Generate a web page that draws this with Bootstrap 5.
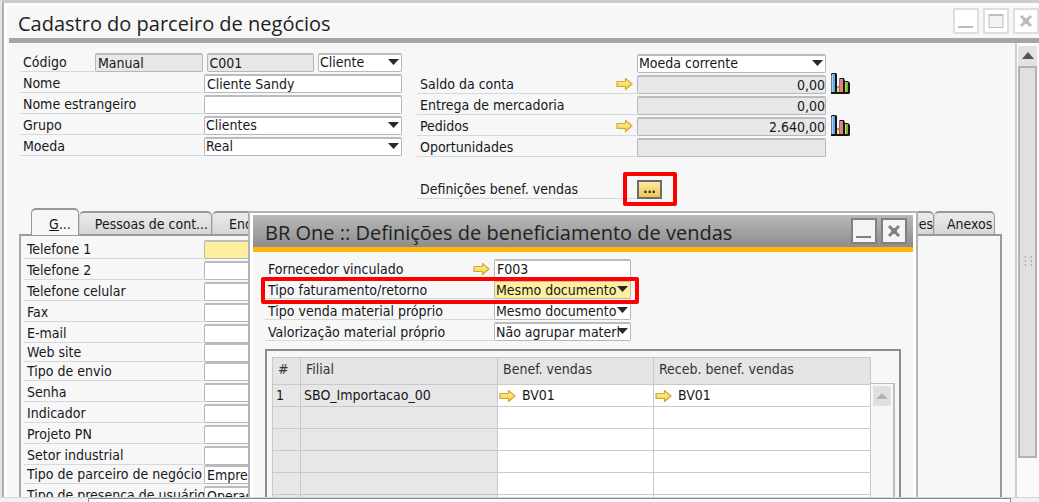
<!DOCTYPE html>
<html lang="pt-BR">
<head>
<meta charset="utf-8">
<meta name="viewport" content="width=device-width, initial-scale=1">
<title>Cadastro do parceiro de negócios</title>
<link href="https://cdn.jsdelivr.net/npm/bootstrap@5.3.0/dist/css/bootstrap.min.css" rel="stylesheet">
<style>
  body { font-family: "DejaVu Sans Condensed", "DejaVu Sans", sans-serif; font-size: 14px; line-height: 16px; color: #16181c; background: #e4e4e4; height: 100vh; }
  button, input, select { font: inherit; color: inherit; }
  /* window frame */
  .win { margin-left: 2px; border-left: 2px solid #b0b0b0; border-top: 3px solid #ccc; background: #f7f7f7; min-height: 0; }
  .win-in { border-left: 3px solid #fff; border-top: 3px solid #fff; min-height: 0; }
  .shrinkable { min-height: 0; min-width: 0; }
  .win-title { font-family: "Open Sans", "Noto Sans", sans-serif; font-size: 20px; line-height: 28px; color: #222; margin: 0; font-weight: 400; white-space: nowrap; }
  .main-bar { height: 32px; padding-left: 11px; }
  .main-rule { height: 5px; background: #a6a6a6; margin-left: 2px; }
  .wbtn { width: 26px; height: 26px; padding: 0; background: #fff; border: 2px solid #dedede; line-height: 0; }
  .wbtn svg { display: block; margin: auto; }
  .wset { gap: 4px; padding-top: 2px; color: #bdbdbd; }
  /* form rows */
  .frow { height: 19px; margin-bottom: 2px; display: flex; }
  .frow.tight { margin-bottom: 0; }
  .lbl { line-height: 16px; padding: 1px 0 0 3px; border-bottom: 1px solid #d3dade; white-space: nowrap; flex: none; display: flex; justify-content: space-between; align-items: center; }
  .w-code { width: 75px; }
  .w-tab { width: 180px; }
  .w-key { width: 184px; }
  .w-acc { width: 220px; }
  .w-dlg { width: 229px; }
  .fld { height: 19px; min-width: 0; flex: 1 1 0; border: 1px solid #b4b8ba; border-top: 2px solid #b9bdbf; border-radius: 2px; background: #fff; padding: 0 2px; line-height: 15px; outline: 0; }
  .fld[readonly] { background: #e7e7e7; }
  .fld.kind { flex: 0 0 84px; }
  input.text-end { padding-right: 0; }
  select.fld { appearance: none; padding: 0 10px 0 1px; background: #fff url("data:image/svg+xml,%3Csvg xmlns='http://www.w3.org/2000/svg' width='11' height='6'%3E%3Cpath d='M0 0h11L5.500 6z' fill='%2326282c'/%3E%3C/svg%3E") no-repeat right 2px top 4px; }
  select.fld.hot, .fld.hot { background-color: #ffee9c; }
  .col-left { width: 382px; margin: 10px 0 0 1px; }
  .col-right { width: 409px; margin: 11px 0 0 15px; }
  .row-def { margin-top: 23px; }
  .chart-col { padding-top: 30px; gap: 21px; }
  .dots { width: 25px; height: 19px; padding: 0; border: 2px solid #6c6c6c; background: linear-gradient(#fbe9a6, #f0c64d); font-size: 12px; line-height: 12px; font-weight: 700; }
  .mark-red::after { content: ""; position: absolute; border: 4px solid #f00; border-radius: 2px; pointer-events: none; inset: -8px -15px -7px -14px; }
  .mark-row::after { inset: -3px -8px -5px -4px; }
  /* tabs */
  .tab-area { margin-right: 13px; }
  .tabs-row { height: 26px; margin-top: 7px; padding: 0 7px 0 12px; }
  .tabx { height: 23px; border: 1px solid #989898; border-top-width: 2px; border-left-color: #ccc; border-bottom: 0; border-radius: 5px 5px 0 0; background: linear-gradient(#ececec, #d6d6d6); padding: 1px 0 0; white-space: nowrap; overflow: hidden; }
  .tabx.on { height: 27px; background: #f7f7f7; z-index: 1; border-left-color: #989898; padding: 4px 0 0 10px; margin-bottom: -1px; width: 48px; }
  .tab-m { width: 133px; padding-left: 12px; }
  .tab-s { width: 61px; padding-left: 12px; }
  .panel { border: 2px solid #9a9a9a; border-bottom: 0; border-left-color: #a8a8a8; padding: 4px 0 0 3px; overflow: hidden; min-height: 0; }
  .panel-form { width: 378px; }
  /* vertical scroll bar */
  .vbar { width: 24px; border-left: 2px solid #d2cfc6; background: #fafafa; padding: 3px 2px 0 1px; }
  .vbar button { height: 20px; background: #e2e2e2; border: 0; padding: 0; line-height: 0; }
  .thumb { height: 87%; background: #e0e0e0; border: 2px solid #b2b2b2; }
  /* dialog */
  .dlg { left: 248px; right: 121px; top: 211px; bottom: 5px; border: 2px solid #b4b4b4; border-bottom: 0; background: #fff; padding: 2px 3px 0; }
  .dlg-bar { height: 32px; background: linear-gradient(#b9b9b9, #8d8d8d); padding: 0 6px 0 12px; }
  .dlg-bar .wbtn { background: #f4f4f4; border-color: #808080; }
  .dlg-bar .wset { color: #808080; padding: 0; }
  .dlg-body { background: #f7f7f7; border-top: 5px solid #ffb60a; padding: 7px 12px 0; min-height: 0; }
  .dlg-form { width: 366px; }
  .gridbox { border: 2px solid #8c8c8c; border-bottom: 0; margin-top: 6px; padding: 6px 4px 0 5px; overflow: hidden; min-height: 0; }
  .grid-t { table-layout: fixed; border-collapse: collapse; width: 100%; }
  .grid-t th, .grid-t td { border: 1px solid #c9c9c9; height: 22px; padding: 0 3px 2px; background: #fff; white-space: nowrap; }
  .grid-t td svg { margin: 0 6px 0 1px; }
  .grid-t th { height: 27px; padding: 0 5px 4px; background: #e5e5e5; font-weight: 400; color: #333; }
  .grid-t .fix { background: #e7e7e7; }
  .c-num { width: 28px; }
  .c-fil { width: 197px; }
  .c-ben { width: 156px; }
  .gscroll { width: 24px; margin-top: 26px; border: 2px solid #bcbcbc; border-width: 1px 2px 0 0; padding: 2px; }
  .gscroll button { background: #e0e0e0; border: 0; height: 20px; padding: 0; line-height: 0; }
  .tray { height: 5px; background: #f0f0f0; border-top: 1px solid #d6d6d6; }
  .tray div { margin: 0 28px 0 88px; height: 5px; background: #fff; border: 1px solid #8a8a8a; border-bottom: 0; }
</style>
</head>
<body class="m-0 overflow-hidden d-flex flex-column position-relative">
<svg width="0" height="0" class="position-absolute" aria-hidden="true">
  <defs>
    <linearGradient id="gold" x1="0" y1="0" x2="0" y2="1"><stop offset="0" stop-color="#fff6a8"/><stop offset="1" stop-color="#f3cd38"/></linearGradient>
    <symbol id="arrow" viewBox="0 0 17 14"><path d="M1 4.500h8.500V1.500L16 7l-6.500 5.500V9.500H1z" fill="url(#gold)" stroke="#d0aa35" stroke-width="1.200" stroke-linejoin="round"/></symbol>
    <symbol id="bars" viewBox="0 0 20 21">
      <path d="M1 1l1-1h4l1 1v12h2V6l1-1h4l1 3h3l2 2v10l-1 1H1z" fill="#151515"/>
      <path d="M1 2h1v17H1z" fill="#6d7a86"/><path d="M2 1h3v18H2z" fill="#6fa6e6"/><path d="M2 1h1v18H2z" fill="#a8cdf8"/>
      <path d="M7 15h2v4H7z" fill="#f8ee30"/><path d="M7 13h2v2H7z" fill="#999"/>
      <path d="M9 5h1v14H9z" fill="#777"/><path d="M10 6h3v13h-3z" fill="#f07a80"/>
      <path d="M15 9h3v10h-3z" fill="#7db436"/><path d="M15 9h1v10h-1z" fill="#b4e36a"/>
    </symbol>
    <symbol id="cross" viewBox="0 0 14 14"><path d="M2 2l10 10M12 2L2 12" stroke="currentColor" stroke-width="3"/><circle cx="7" cy="7" r="3" fill="currentColor"/></symbol>
  </defs>
</svg>

<main class="win flex-grow-1 d-flex flex-column">
  <div class="win-in flex-grow-1 d-flex flex-column">
    <header class="main-bar d-flex justify-content-between">
      <h1 class="win-title pt-1">Cadastro do parceiro de negócios</h1>
      <div class="wset d-flex">
        <button class="wbtn" aria-label="Minimizar"><svg width="18" height="18"><path d="M1 15h15" stroke="currentColor" stroke-width="2"/></svg></button>
        <button class="wbtn" aria-label="Maximizar"><svg width="18" height="18"><path d="M2 2.500h14v13H2z" fill="#f2f2f2" stroke="currentColor"/><path d="M2 3h14" stroke="currentColor" stroke-width="2"/></svg></button>
        <button class="wbtn" aria-label="Fechar"><svg width="14" height="14"><use href="#cross"/></svg></button>
      </div>
    </header>
    <div class="main-rule"></div>

    <div class="shrinkable d-flex flex-grow-1">
      <div class="shrinkable flex-grow-1 d-flex flex-column ps-2 ms-1">
        <div class="d-flex align-items-start">
          <div class="col-left">
            <div class="frow"><label class="lbl w-code" for="cod">Código</label><input class="fld" id="cod" readonly value="Manual"><input class="fld ms-1" aria-label="Número" readonly value="C001"><select class="fld kind ms-1" aria-label="Tipo"><option>Cliente</option></select></div>
            <div class="frow"><label class="lbl w-key" for="nome">Nome</label><input class="fld" id="nome" value="Cliente Sandy"></div>
            <div class="frow"><label class="lbl w-key" for="estr">Nome estrangeiro</label><input class="fld" id="estr"></div>
            <div class="frow"><label class="lbl w-key" for="grupo">Grupo</label><select class="fld" id="grupo"><option>Clientes</option></select></div>
            <div class="frow"><label class="lbl w-key" for="moeda">Moeda</label><select class="fld" id="moeda"><option>Real</option></select></div>
          </div>
          <div class="col-right">
            <div class="frow"><span class="w-acc flex-shrink-0"></span><select class="fld" aria-label="Moeda da conta"><option>Moeda corrente</option></select></div>
            <div class="frow"><label class="lbl w-acc" for="saldo">Saldo da conta <svg class="me-1" width="17" height="14"><use href="#arrow"/></svg></label><input class="fld text-end" id="saldo" readonly value="0,00"></div>
            <div class="frow"><label class="lbl w-acc" for="entr">Entrega de mercadoria</label><input class="fld text-end" id="entr" readonly value="0,00"></div>
            <div class="frow"><label class="lbl w-acc" for="ped">Pedidos <svg class="me-1" width="17" height="14"><use href="#arrow"/></svg></label><input class="fld text-end" id="ped" readonly value="2.640,00"></div>
            <div class="frow"><label class="lbl w-acc" for="opo">Oportunidades</label><input class="fld text-end" id="opo" readonly></div>
            <div class="frow row-def"><label class="lbl w-acc" for="def">Definições benef. vendas</label><span class="position-relative mark-red"><button class="dots d-block" id="def">...</button></span></div>
          </div>
          <div class="chart-col d-flex flex-column ms-1">
            <svg width="20" height="21"><use href="#bars"/></svg>
            <svg width="20" height="21"><use href="#bars"/></svg>
          </div>
        </div>

        <div class="tab-area shrinkable flex-grow-1 d-flex flex-column">
          <nav class="tabs-row d-flex align-items-end" aria-label="Seções">
            <button class="tabx on position-relative"><u>G</u>...</button>
            <button class="tabx tab-m">Pessoas de cont...</button>
            <button class="tabx text-start ps-3">End</button>
            <button class="tabx flex-grow-1 text-end">Observações</button>
            <button class="tabx tab-s text-start">Anexos</button>
          </nav>
          <div class="panel flex-grow-1">
            <div class="panel-form">
              <div class="frow"><label class="lbl w-tab" for="p1">Telefone 1</label><input class="fld hot" id="p1"></div>
              <div class="frow"><label class="lbl w-tab" for="p2">Telefone 2</label><input class="fld" id="p2"></div>
              <div class="frow"><label class="lbl w-tab" for="p3">Telefone celular</label><input class="fld" id="p3"></div>
              <div class="frow"><label class="lbl w-tab" for="p4">Fax</label><input class="fld" id="p4"></div>
              <div class="frow tight"><label class="lbl w-tab" for="p5">E-mail</label><input class="fld" id="p5"></div>
              <div class="frow tight"><label class="lbl w-tab" for="p6">Web site</label><input class="fld" id="p6"></div>
              <div class="frow"><label class="lbl w-tab" for="p7">Tipo de envio</label><input class="fld" id="p7"></div>
              <div class="frow"><label class="lbl w-tab" for="p8">Senha</label><input class="fld" id="p8"></div>
              <div class="frow"><label class="lbl w-tab" for="p9">Indicador</label><input class="fld" id="p9"></div>
              <div class="frow"><label class="lbl w-tab" for="p10">Projeto PN</label><input class="fld" id="p10"></div>
              <div class="frow tight"><label class="lbl w-tab" for="p11">Setor industrial</label><input class="fld" id="p11"></div>
              <div class="frow"><label class="lbl w-tab" for="p12">Tipo de parceiro de negócio</label><input class="fld" id="p12" value="Empresa"></div>
              <div class="frow"><label class="lbl w-tab" for="p13">Tipo de presença de usuário</label><input class="fld" id="p13" value="Operação"></div>
            </div>
          </div>
        </div>
      </div>
      <div class="vbar d-flex flex-column flex-shrink-0">
        <button aria-label="Rolar para cima"><svg width="12" height="7"><path d="M6 0l6 7H0z" fill="#555"/></svg></button>
        <div class="thumb d-flex align-items-center justify-content-center"><svg width="9" height="12"><path d="M0 1h3M6 1h3M0 5h3M6 5h3M0 9h3M6 9h3" stroke="#aaa" stroke-width="2"/><path d="M0 1h2M6 1h2M0 5h2M6 5h2M0 9h2M6 9h2" stroke="#fff"/></svg></div>
      </div>
    </div>
  </div>
</main>

<section class="dlg position-absolute d-flex flex-column z-2" role="dialog" aria-labelledby="dt">
  <header class="dlg-bar d-flex justify-content-between align-items-center">
    <h2 class="win-title pt-1" id="dt">BR One :: Definições de beneficiamento de vendas</h2>
    <div class="wset d-flex">
      <button class="wbtn" aria-label="Minimizar"><svg width="18" height="18"><path d="M1 15h15" stroke="currentColor" stroke-width="2"/></svg></button>
      <button class="wbtn" aria-label="Fechar"><svg width="14" height="14"><use href="#cross"/></svg></button>
    </div>
  </header>
  <div class="dlg-body flex-grow-1 d-flex flex-column">
    <div class="dlg-form">
      <div class="frow"><label class="lbl w-dlg" for="d1">Fornecedor vinculado <svg width="17" height="14" class="me-1"><use href="#arrow"/></svg></label><input class="fld" id="d1" value="F003"></div>
      <div class="frow position-relative mark-red mark-row"><label class="lbl w-dlg" for="d2">Tipo faturamento/retorno</label><select class="fld hot" id="d2"><option>Mesmo documento</option></select></div>
      <div class="frow"><label class="lbl w-dlg" for="d3">Tipo venda material próprio</label><select class="fld" id="d3"><option>Mesmo documento</option></select></div>
      <div class="frow"><label class="lbl w-dlg" for="d4">Valorização material próprio</label><select class="fld" id="d4"><option>Não agrupar materi</option></select></div>
    </div>
    <div class="gridbox flex-grow-1 d-flex">
      <div class="flex-grow-1">
        <table class="grid-t">
          <colgroup><col class="c-num"><col class="c-fil"><col class="c-ben"><col></colgroup>
          <thead><tr><th>#</th><th>Filial</th><th>Benef. vendas</th><th>Receb. benef. vendas</th></tr></thead>
          <tbody>
            <tr><td class="fix">1</td><td class="fix">SBO_Importacao_00</td><td class="ps-0"><svg width="17" height="14"><use href="#arrow"/></svg>BV01</td><td class="ps-0"><svg width="17" height="14"><use href="#arrow"/></svg>BV01</td></tr>
            <tr><td class="fix"></td><td class="fix"></td><td></td><td></td></tr>
            <tr><td class="fix"></td><td class="fix"></td><td></td><td></td></tr>
            <tr><td class="fix"></td><td class="fix"></td><td></td><td></td></tr>
            <tr><td class="fix"></td><td class="fix"></td><td></td><td></td></tr>
            <tr><td class="fix"></td><td class="fix"></td><td></td><td></td></tr>
          </tbody>
        </table>
      </div>
      <div class="gscroll d-flex flex-column flex-shrink-0"><button aria-label="Rolar a grade para cima"><svg width="12" height="6"><path d="M6 0l6 6H0z" fill="#b4b4b4"/></svg></button></div>
    </div>
  </div>
</section>

<footer class="tray flex-shrink-0"><div></div></footer>
<script src="https://cdn.jsdelivr.net/npm/bootstrap@5.3.0/dist/js/bootstrap.bundle.min.js"></script>
</body>
</html>
